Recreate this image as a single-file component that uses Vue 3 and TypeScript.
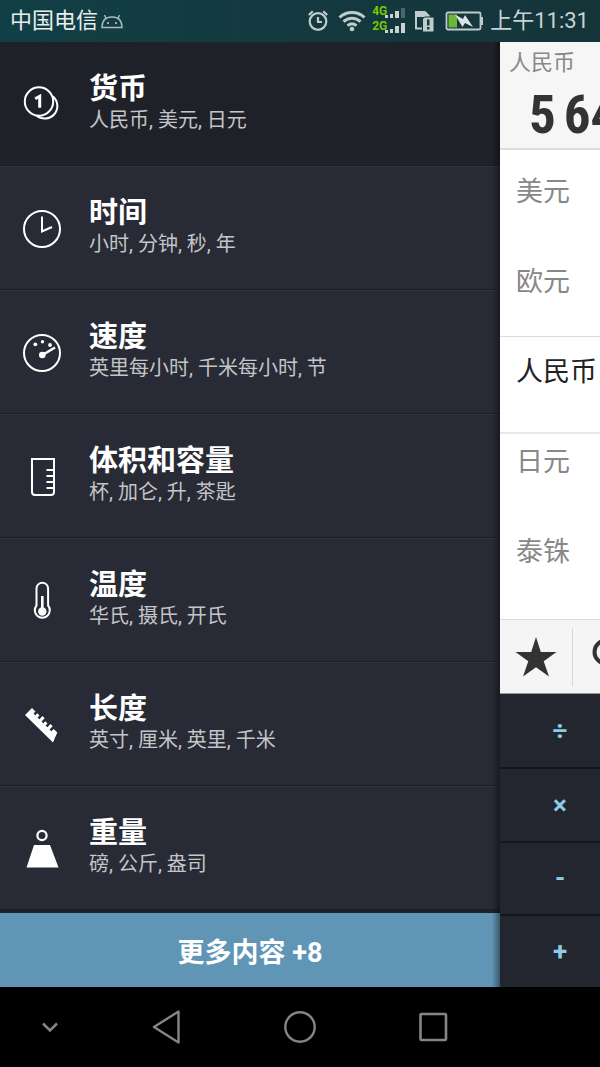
<script setup lang="ts">
interface Category {
  id: string
  title: string
  units: string
}

const categories: Category[] = [
  { id: 'currency', title: '货币', units: '人民币, 美元, 日元' },
  { id: 'time', title: '时间', units: '小时, 分钟, 秒, 年' },
  { id: 'speed', title: '速度', units: '英里每小时, 千米每小时, 节' },
  { id: 'volume', title: '体积和容量', units: '杯, 加仑, 升, 茶匙' },
  { id: 'temperature', title: '温度', units: '华氏, 摄氏, 开氏' },
  { id: 'length', title: '长度', units: '英寸, 厘米, 英里, 千米' },
  { id: 'weight', title: '重量', units: '磅, 公斤, 盎司' },
]

const active = 'currency'
const before = ['美元', '欧元']
const current = '人民币'
const after = ['日元', '泰铢']
const digitGroups = ['5', '64']
const operators = ['÷', '×', '-', '+']
</script>

<template>
  <div class="phone">
    <header class="status">
      <span class="carrier">中国电信</span>
      <svg class="android" width="24" height="18" viewBox="0 0 24 18" fill="none" stroke="#a9bcbd" stroke-width="1.4">
        <path d="M2 15.5C2 8.500 6 5 12 5s10 3.500 10 10.500zM6 6.500L4.500 3M18 6.500L19.500 3" />
        <circle cx="8" cy="11" r="1" fill="#cfdada" stroke="none" />
        <circle cx="16" cy="11" r="1" fill="#cfdada" stroke="none" />
      </svg>
      <div class="indicators">
        <svg width="22" height="24" viewBox="0 0 22 24" fill="none" stroke="#bfcccd" stroke-width="2.200">
          <circle cx="11" cy="12.500" r="8.300" />
          <path d="M11 8v5h4M1.800 6l4-3.800M20.200 6l-4-3.800" />
        </svg>
        <svg width="28" height="24" viewBox="0 0 28 24" fill="none" stroke="#bfcccd" stroke-width="3">
          <path d="M1.500 8.500c7-6.700 18-6.700 25 0M5.500 12.700c5-4.600 12-4.600 17 0M9.500 16.700c3-2.500 6-2.500 9 0" />
          <circle cx="14" cy="20" r="2.300" fill="#bfcccd" stroke="none" />
        </svg>
        <div class="signal">
          <div class="signal-row">
            <span>4G</span>
            <svg width="20" height="14" viewBox="0 0 20 14" fill="#c8d3d4">
              <path d="M0 9h3v3H0zM5 8h3v4H5zM10 5h4v7h-4z" />
              <path d="M16 2h4v10h-4z" fill="#44686b" />
            </svg>
          </div>
          <div class="signal-row">
            <span>2G</span>
            <svg width="20" height="14" viewBox="0 0 20 14" fill="#c8d3d4">
              <path d="M0 9h3v3H0zM5 8h3v4H5zM10 5h4v7h-4zM16 2h4v10h-4z" />
            </svg>
          </div>
        </div>
        <svg class="sim" width="20" height="24" viewBox="0 0 20 24">
          <path d="M2 3h8.500l4 4v12.500H2z" fill="none" stroke="#bfcccd" stroke-width="2" />
          <path d="M1 2h10l4.500 4.500V8H1z" fill="#bfcccd" />
          <path d="M10.500 8h9.500v15H8.500V10z" fill="#bfcccd" stroke="#15363b" stroke-width="1" />
          <path d="M13 10.500h2.500v6H13zM13 18h2.500v2.500H13z" fill="#173b40" />
        </svg>
        <svg class="battery" width="38" height="20" viewBox="0 0 38 20">
          <rect x="1.500" y="1.500" width="34" height="17" rx="1.500" fill="none" stroke="#bfcccd" stroke-width="1.800" />
          <path d="M36 6h2v8h-2z" fill="#bfcccd" />
          <path d="M3.500 3.500h8.500v13H3.500z" fill="#6eb536" />
          <path d="M10 3.500l8 4.500 2-4 8 12-8-4-2.500 4z" fill="#dce4e4" />
        </svg>
        <time class="clock">上午11:31</time>
      </div>
    </header>

    <div class="body">
      <nav class="drawer">
        <button
          v-for="c in categories"
          :key="c.id"
          class="category"
          :class="{ active: c.id === active }"
          type="button"
        >
          <svg class="icon" width="40" height="40" viewBox="0 0 40 40" fill="none" stroke="#fff" stroke-width="2">
            <template v-if="c.id === 'currency'">
              <path d="M31 11.500A12.300 12.300 0 1 1 14.500 30.500" />
              <circle cx="17" cy="16.500" r="14.200" />
              <path d="M13.200 13.800l4.500-2.500v11.500" stroke-width="3" />
            </template>
            <template v-else-if="c.id === 'time'">
              <circle cx="20" cy="20" r="18" />
              <path d="M20 7.500v15l10-4.500" />
            </template>
            <template v-else-if="c.id === 'speed'">
              <circle cx="20" cy="20" r="18" />
              <path d="M20.500 22L33 14.500" stroke-width="2.600" />
              <g fill="#fff" stroke="none">
                <circle cx="20.300" cy="22" r="3.300" />
                <circle cx="13.300" cy="11.300" r="1.900" />
                <circle cx="20.500" cy="8.800" r="1.700" />
                <circle cx="28" cy="12" r="1.900" />
              </g>
            </template>
            <template v-else-if="c.id === 'volume'">
              <path d="M10 2h22v33q0 3-3 3H13q-3 0-3-3z" />
              <path d="M24.500 13h7.500M24.500 19h7.500M24.500 25h7.500M24.500 31h7.500" />
            </template>
            <template v-else-if="c.id === 'temperature'">
              <path d="M14.500 24.500V7.500a5.800 5.800 0 0 1 11.600 0v17a7.500 7.500 0 1 1-11.600 0z" />
              <path d="M20.300 15v15" stroke-width="2.600" />
              <circle cx="20.300" cy="30.500" r="4.200" fill="#fff" stroke="none" />
            </template>
            <path
              v-else-if="c.id === 'length'"
              fill="#fff"
              stroke="none"
              d="M3 10L10 3l3.500 3.500-2 2 1.800 1.800 2-2 2.200 2.200-2 2 1.800 1.800 3.200-3.200 2.200 2.200-3.200 3.200 1.800 1.800 2-2 2.200 2.200-2 2 1.800 1.800 3.200-3.200 2.200 2.200-3.200 3.200 1.800 1.800 2.400-2.400 3.600 3.600L31 37.500z"
            />
            <template v-else>
              <circle cx="20" cy="6.500" r="4.600" stroke-width="2.200" />
              <path d="M12 16h16l8.500 22.500h-32z" fill="#fff" stroke="none" />
            </template>
          </svg>
          <span class="text">
            <span class="title">{{ c.title }}</span>
            <span class="units">{{ c.units }}</span>
          </span>
        </button>
        <button class="more" type="button">更多内容 +8</button>
      </nav>

      <main class="converter">
        <section class="amount">
          <span class="amount-unit">人民币</span>
          <output class="amount-value"><span v-for="g in digitGroups" :key="g">{{ g }}</span></output>
        </section>
        <ul class="list top">
          <li v-for="u in before" :key="u">{{ u }}</li>
        </ul>
        <ul class="list selected">
          <li>{{ current }}</li>
        </ul>
        <ul class="list bottom">
          <li v-for="u in after" :key="u">{{ u }}</li>
        </ul>
        <div class="toolbar">
          <button class="tool star" type="button" aria-label="收藏">
            <svg width="42" height="40" viewBox="0 0 42 40" fill="#333">
              <path d="M21 0l4.800 15H41.500L28.700 24.200 34 39.500 21 30.200 8 39.500l5.300-15.300L.5 15h15.700z" />
            </svg>
          </button>
          <button class="tool search" type="button" aria-label="搜索">
            <svg width="40" height="40" viewBox="0 0 40 40" fill="none" stroke="#333" stroke-width="4">
              <circle cx="14" cy="15" r="11.500" />
              <path d="M23 24l13 13" stroke-width="6" />
            </svg>
          </button>
        </div>
        <div class="keypad">
          <button v-for="o in operators" :key="o" class="key" type="button">{{ o }}</button>
        </div>
      </main>
    </div>

    <footer class="navbar">
      <button class="nav hide" type="button" aria-label="隐藏">
        <svg width="20" height="20" viewBox="0 0 20 20" fill="none" stroke="#858585" stroke-width="2.500"><path d="M3 6.500l7 7 7-7" /></svg>
      </button>
      <button class="nav" type="button" aria-label="返回">
        <svg width="36" height="36" viewBox="0 0 36 36" fill="none" stroke="#858585" stroke-width="2.400" stroke-linejoin="round"><path d="M29.500 2.500v31L5 18z" /></svg>
      </button>
      <button class="nav" type="button" aria-label="主页">
        <svg width="36" height="36" viewBox="0 0 36 36" fill="none" stroke="#858585" stroke-width="2.400"><circle cx="18" cy="18" r="14.700" /></svg>
      </button>
      <button class="nav" type="button" aria-label="最近">
        <svg width="36" height="36" viewBox="0 0 36 36" fill="none" stroke="#858585" stroke-width="2.600"><rect x="5.500" y="5" width="25.500" height="26" rx="1" /></svg>
      </button>
    </footer>
  </div>
</template>

<style>
body {
  margin: 0;
  background: #000;
}
</style>

<style scoped>
.phone {
  display: flex;
  flex-direction: column;
  min-height: 100vh;
  overflow: hidden;
  background: #000;
  font-family: Roboto, "Noto Sans CJK SC", sans-serif;
}
button {
  margin: 0;
  padding: 0;
  border: 0;
  background: none;
  color: inherit;
  font: inherit;
  text-align: left;
}
svg {
  display: block;
  flex: none;
}
.status {
  display: flex;
  align-items: center;
  box-sizing: border-box;
  height: 42px;
  padding: 0 11px 0 10px;
  background: linear-gradient(90deg, #113f45, #15343a);
  color: #c8d3d4;
  font-size: 22px;
  line-height: 42px;
  white-space: nowrap;
}
.carrier {
  color: #e8eeee;
}
.android {
  margin-left: 2px;
}
.indicators {
  display: flex;
  align-items: center;
  margin-left: auto;
}
.indicators > * {
  margin-left: 9px;
}
.indicators > .signal {
  display: grid;
  margin-left: 6px;
}
.indicators > .battery {
  margin-left: 11px;
}
.indicators > .clock {
  margin-left: 7px;
}
.signal-row {
  display: flex;
  align-items: flex-start;
  height: 15px;
  color: #78c800;
  font-size: 12px;
  font-weight: 700;
  line-height: 10px;
}
.signal-row svg {
  margin-left: -2px;
}
.body {
  display: flex;
  flex: 1;
}
.drawer {
  position: relative;
  display: flex;
  flex: 5;
  flex-direction: column;
  background: #282b35;
}
.drawer::after {
  position: absolute;
  top: 0;
  right: 0;
  bottom: 0;
  width: 8px;
  background: linear-gradient(90deg, transparent, rgba(0, 0, 0, 0.4));
  content: "";
}
.category {
  display: flex;
  box-sizing: border-box;
  min-height: 124px;
  padding: 30px 22px 0;
  border-top: 1px solid #31343e;
  border-bottom: 1px solid #1c1e26;
  color: #fff;
}
.category.active {
  border-top-color: #1f2129;
  background: #1f2129;
}
.icon {
  margin-top: 12px;
}
.text {
  display: grid;
  align-content: start;
  margin-left: 27px;
}
.title {
  font-size: 29px;
  font-weight: 700;
  line-height: 32px;
}
.units {
  color: #c4c5c8;
  font-size: 20px;
  line-height: 30px;
}
.more {
  flex: 1;
  min-height: 73px;
  border-top: 3px solid #1f2129;
  background: #6095b5;
  color: #fff;
  font-size: 27px;
  font-weight: 700;
  text-align: center;
}
.converter {
  display: flex;
  flex: 1;
  flex-direction: column;
  min-width: 0;
  overflow: hidden;
  background: #fff;
  white-space: nowrap;
}
.amount {
  display: grid;
  box-sizing: border-box;
  height: 108px;
  padding: 6px 0 0 9px;
  align-content: start;
  border-bottom: 2px solid #dcdcdc;
  background: #f6f6f6;
}
.amount-unit {
  color: #888;
  font-size: 22px;
  line-height: 30px;
}
.amount-value {
  display: flex;
  gap: 8px;
  padding-left: 20px;
  color: #333;
  font-family: "Roboto Condensed", "Liberation Sans Narrow", Roboto, sans-serif;
  font-size: 53px;
  font-weight: 700;
  line-height: 74px;
}
.list {
  box-sizing: border-box;
  margin: 0;
  padding: 0 0 0 16px;
  color: #888;
  font-size: 27px;
  line-height: 30px;
  list-style: none;
}
.list li {
  height: 90px;
}
.top {
  height: 186px;
  padding-top: 27px;
}
.selected {
  height: 98px;
  padding-top: 20px;
  border-top: 1px solid #dcdcdc;
  border-bottom: 2px solid #e8e8e8;
  color: #222;
}
.bottom {
  height: 185px;
  padding-top: 13px;
}
.toolbar {
  display: flex;
  align-items: center;
  box-sizing: border-box;
  height: 75px;
  border-top: 1px solid #dcdcdc;
  border-bottom: 1px solid #999;
  background: #f5f5f5;
}
.tool {
  display: flex;
  flex: none;
  align-items: center;
  height: 58px;
}
.star {
  justify-content: center;
  width: 73px;
  border-right: 1px solid #d8d8d8;
}
.search {
  padding-left: 19px;
}
.keypad {
  display: grid;
  flex: 1;
  grid-auto-rows: 1fr;
  background: #23262e;
}
.key {
  width: 120px;
  border-top: 2px solid #15171d;
  color: #8ecbe4;
  font-size: 26px;
  font-weight: 700;
  text-align: center;
}
.key:first-child {
  border-top: 0;
}
.navbar {
  display: flex;
  align-items: center;
  height: 80px;
  background: #000;
}
.nav {
  display: flex;
  flex: 4;
  justify-content: center;
}
.hide {
  flex: 3;
}
.navbar::after {
  flex: 3;
  content: "";
}
</style>
